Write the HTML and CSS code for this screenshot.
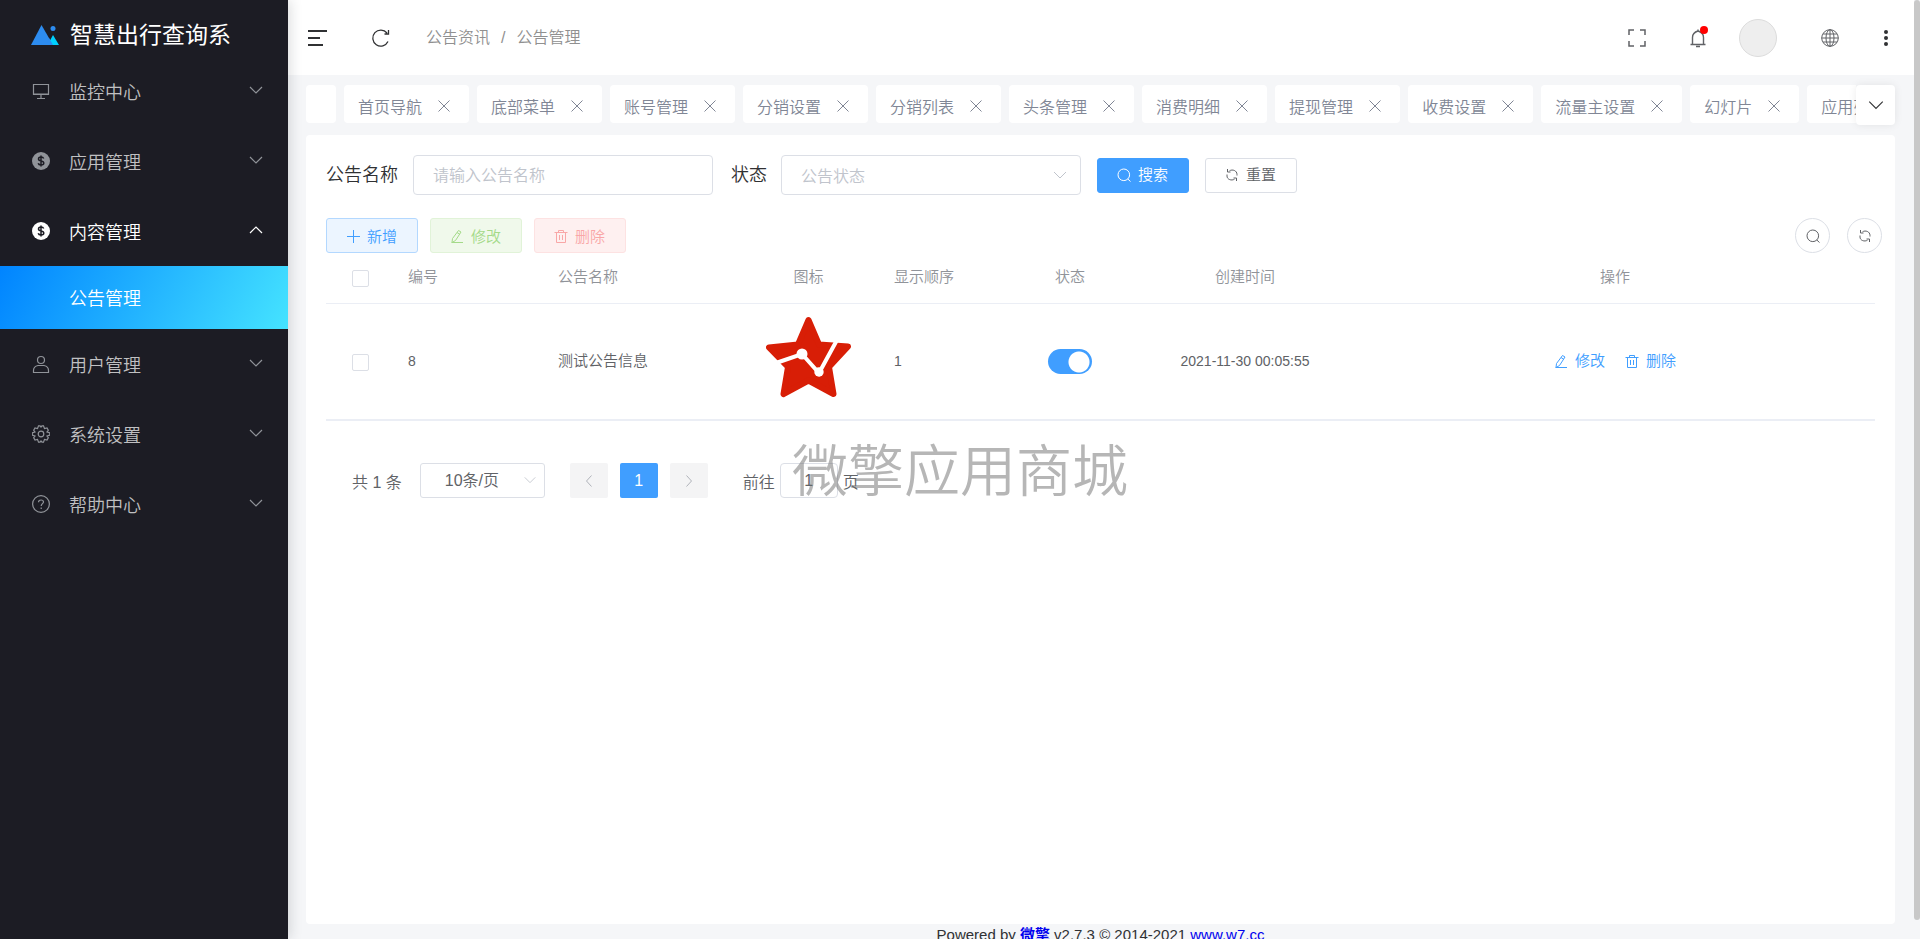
FILE: index.html
```html
<!DOCTYPE html>
<html lang="zh-CN">
<head>
<meta charset="utf-8">
<title>公告管理</title>
<link rel="stylesheet" href="styles.css">
</head>
<body>
<svg class="sprite" aria-hidden="true">
  <symbol id="i-down" viewBox="0 0 16 16"><path d="M2 5l6 6 6-6"/></symbol>
  <symbol id="i-up" viewBox="0 0 16 16"><path d="M2 11l6-6 6 6"/></symbol>
  <symbol id="i-left" viewBox="0 0 16 16"><path d="M10.500 2.500L5.500 8l5 5.500"/></symbol>
  <symbol id="i-right" viewBox="0 0 16 16"><path d="M5.500 2.500L10.500 8l-5 5.500"/></symbol>
  <symbol id="i-close" viewBox="0 0 16 16"><path d="M2.500 2.500l11 11M13.500 2.500l-11 11"/></symbol>
  <symbol id="i-plus" viewBox="0 0 14 14"><path d="M7.500 1v13M1 7.500h13"/></symbol>
  <symbol id="i-search" viewBox="0 0 14 14"><circle cx="6.800" cy="6.800" r="5.800"/><path d="M10.800 11l2.700 2.500"/></symbol>
  <symbol id="i-edit" viewBox="0 0 14 14"><path d="M8.500 1.500l2.500 1.500-5.500 8.500-3.500 2 .5-4zM7 3.500l2.700 1.700M1.500 13.500h11.500"/></symbol>
  <symbol id="i-trash" viewBox="0 0 14 14"><path d="M.5 3.500h13M4.500 3.500v-2h5v2M2.500 3.500v10h9v-10M5.500 6v5M8.500 6v5"/></symbol>
  <symbol id="i-sync" viewBox="0 0 14 14"><path d="M2.500 1v3h3M4.500 2.800C7.500 1 12 2.500 12 6.500v1M11.500 13v-3h-3M9.500 11.200C6.500 13 2 11.500 2 8V6.500"/></symbol>
  <symbol id="i-coin" viewBox="0 0 18 18"><circle cx="9" cy="9" r="9" fill="currentColor" stroke="none"/><path class="coin-mark" d="M11.700 6.500C11.200 5.300 10.200 5 9 5 7.500 5 6.500 5.700 6.500 6.900c0 2.700 5.300 1.400 5.300 4.100 0 1.300-1.200 2-2.800 2-1.400 0-2.500-.5-2.800-1.700M9 3.500v11"/></symbol>
</svg>

<div class="app">
  <aside class="sidebar">
    <div class="brand">
      <svg class="logo" viewBox="0 0 28 22"><path d="M10.500 1L22 21H0z" fill="#2d8cf0"/><path d="M22 11l6 10H16.500z" fill="#00d1ff"/><path d="M18 14l4 7H16z" fill="#2d8cf0"/><circle cx="22" cy="4.500" r="2.500" fill="#2d8cf0"/></svg>
      <h1>智慧出行查询系</h1>
    </div>
    <nav class="menu">
      <button class="menu-item"><svg class="icon m-icon" viewBox="0 0 18 18"><path d="M1.500 2.500h15v10h-15zM1 12h16M5 16.500h8M9 13v3"/></svg><span>监控中心</span><svg class="icon chev"><use href="#i-down"/></svg></button>
      <button class="menu-item"><svg class="icon m-icon"><use href="#i-coin"/></svg><span>应用管理</span><svg class="icon chev"><use href="#i-down"/></svg></button>
      <button class="menu-item open"><svg class="icon m-icon"><use href="#i-coin"/></svg><span>内容管理</span><svg class="icon chev"><use href="#i-up"/></svg></button>
      <a class="menu-sub" href="#notice">公告管理</a>
      <button class="menu-item"><svg class="icon m-icon" viewBox="0 0 18 18"><circle cx="9" cy="5" r="3.500"/><path d="M1.500 17.500v-2c0-3 2-4.500 4.500-5h6c2.500.5 4.500 2 4.500 5v2z"/></svg><span>用户管理</span><svg class="icon chev"><use href="#i-down"/></svg></button>
      <button class="menu-item"><svg class="icon m-icon" viewBox="0 0 18 18"><path d="M6.500.8h1.500l1 1.200 1-1.200h1.500l1 2.800 2.500-.6 1.300 2.300-1.300 1.700 2.800.8v2.400l-2.800.8 1.300 1.700-1.300 2.300-2.500-.6-1 2.800H10l-1-1.200-1 1.200H6.500l-1-2.800-2.500.6-1.300-2.300L3 11 .3 10.200V7.800L3 7 1.700 5.300 3 3l2.500.6z"/><circle cx="9" cy="9" r="2.800"/></svg><span>系统设置</span><svg class="icon chev"><use href="#i-down"/></svg></button>
      <button class="menu-item"><svg class="icon m-icon" viewBox="0 0 18 18"><circle cx="9" cy="9" r="8.400"/><path d="M6.500 7.200C6.500 4.200 11.500 4.400 11.500 7c0 1.700-2.300 1.700-2.300 4M9.200 12.500v1.400"/></svg><span>帮助中心</span><svg class="icon chev"><use href="#i-down"/></svg></button>
    </nav>
  </aside>

  <div class="page">
    <header class="topbar">
      <button class="plain" aria-label="折叠菜单"><svg class="icon i20 dark" viewBox="0 0 20 20"><path d="M0 3h19M0 10h12M0 17h15" stroke-width="2"/></svg></button>
      <button class="plain reload" aria-label="刷新"><svg class="icon i20 dark" viewBox="0 0 20 20"><path d="M17 13.500A8 8 0 1 1 16 5M17.500 2v4h-4" stroke-width="1.300"/></svg></button>
      <nav class="crumbs"><span>公告资讯</span><span>/</span><span>公告管理</span></nav>
      <div class="tools">
        <button class="plain" aria-label="全屏"><svg class="icon i18" viewBox="0 0 18 18"><path d="M1 6V1h5M12 1h5v5M17 12v5h-5M6 17H1v-5" stroke-width="1.500"/></svg></button>
        <button class="plain bell" aria-label="通知"><svg class="icon i20" viewBox="0 0 20 20"><path d="M2.500 16.500h15M4.500 16V9.500c0-3 2-5.500 5.500-6.500 3.500 1 5.500 3.500 5.500 6.500V16M10 1.500V3M8 18.500h4" stroke-width="1.400"/></svg><i class="dot"></i></button>
        <button class="avatar" aria-label="用户"></button>
        <button class="plain globe" aria-label="语言"><svg class="icon i18" viewBox="0 0 18 18"><circle cx="9" cy="9" r="8.300"/><ellipse cx="9" cy="9" rx="4" ry="8.300"/><path d="M9 .7v16.600M.7 9h16.600M2 5h14M2 13h14"/></svg></button>
        <button class="plain more" aria-label="更多"><svg class="icon i18" viewBox="0 0 18 18"><g fill="#303133" stroke="none"><circle cx="9" cy="3" r="2"/><circle cx="9" cy="9" r="2"/><circle cx="9" cy="15" r="2"/></g></svg></button>
      </div>
    </header>

    <main class="content">
      <div class="tabbar">
        <div class="tabs">
          <div class="tab stub"></div>
          <div class="tab">首页导航<svg class="icon i16"><use href="#i-close"/></svg></div>
          <div class="tab">底部菜单<svg class="icon i16"><use href="#i-close"/></svg></div>
          <div class="tab">账号管理<svg class="icon i16"><use href="#i-close"/></svg></div>
          <div class="tab">分销设置<svg class="icon i16"><use href="#i-close"/></svg></div>
          <div class="tab">分销列表<svg class="icon i16"><use href="#i-close"/></svg></div>
          <div class="tab">头条管理<svg class="icon i16"><use href="#i-close"/></svg></div>
          <div class="tab">消费明细<svg class="icon i16"><use href="#i-close"/></svg></div>
          <div class="tab">提现管理<svg class="icon i16"><use href="#i-close"/></svg></div>
          <div class="tab">收费设置<svg class="icon i16"><use href="#i-close"/></svg></div>
          <div class="tab">流量主设置<svg class="icon i16"><use href="#i-close"/></svg></div>
          <div class="tab">幻灯片<svg class="icon i16"><use href="#i-close"/></svg></div>
          <div class="tab">应用列表<svg class="icon i16"><use href="#i-close"/></svg></div>
        </div>
        <button class="tab-more" aria-label="更多标签"><svg class="icon i18"><use href="#i-down"/></svg></button>
      </div>

      <section class="card">
        <form class="filters">
          <label for="name">公告名称</label>
          <input class="field" id="name" type="text" placeholder="请输入公告名称">
          <label for="state" class="state-label">状态</label>
          <span class="select-wrap"><select class="field" id="state"><option>公告状态</option></select><svg class="icon i16"><use href="#i-down"/></svg></span>
          <button type="button" class="btn primary"><svg class="icon i14"><use href="#i-search"/></svg>搜索</button>
          <button type="button" class="btn"><svg class="icon i14"><use href="#i-sync"/></svg>重置</button>
        </form>

        <div class="actions">
          <button class="btn add"><svg class="icon i14"><use href="#i-plus"/></svg>新增</button>
          <button class="btn edit"><svg class="icon i14"><use href="#i-edit"/></svg>修改</button>
          <button class="btn del"><svg class="icon i14"><use href="#i-trash"/></svg>删除</button>
          <button class="round first" aria-label="搜索"><svg class="icon i14"><use href="#i-search"/></svg></button>
          <button class="round" aria-label="刷新"><svg class="icon i14"><use href="#i-sync"/></svg></button>
        </div>

        <table class="grid">
          <colgroup><col class="c-check"><col class="c-id"><col class="c-name"><col class="c-icon"><col class="c-order"><col class="c-state"><col class="c-time"><col></colgroup>
          <thead>
            <tr><th class="mid"><input type="checkbox" aria-label="全选"></th><th>编号</th><th>公告名称</th><th class="mid">图标</th><th>显示顺序</th><th class="mid">状态</th><th class="mid">创建时间</th><th class="mid">操作</th></tr>
          </thead>
          <tbody>
            <tr>
              <td class="mid"><input type="checkbox" aria-label="选择"></td>
              <td class="num">8</td>
              <td>测试公告信息</td>
              <td class="mid"><svg class="star" viewBox="0 0 85 90"><path d="M42.500 4L53 28.500l29 2L63 51l4.500 27L42.500 64.500 17.500 78 22 51 3 31.500l29-3z" fill="#d81e06" stroke="#d81e06" stroke-width="6" stroke-linejoin="round"/><path d="M10 47l26-9 17 19 18-33" fill="none" stroke="#fff" stroke-width="4"/><circle cx="36" cy="38" r="5.500" fill="#fff"/><circle cx="53" cy="56" r="4.700" fill="#fff"/></svg></td>
              <td class="num">1</td>
              <td class="mid"><input type="checkbox" class="switch" aria-label="启用" checked></td>
              <td class="mid num">2021-11-30 00:05:55</td>
              <td class="mid"><div class="ops"><a href="#edit"><svg class="icon i14"><use href="#i-edit"/></svg>修改</a><a href="#del"><svg class="icon i14"><use href="#i-trash"/></svg>删除</a></div></td>
            </tr>
          </tbody>
        </table>

        <div class="pager">
          <span class="total">共 1 条</span>
          <span class="select-wrap size"><select aria-label="每页条数"><option>10条/页</option></select><svg class="icon i14"><use href="#i-down"/></svg></span>
          <div class="pages">
            <button aria-label="上一页"><svg class="icon i16"><use href="#i-left"/></svg></button>
            <button class="on">1</button>
            <button aria-label="下一页"><svg class="icon i16"><use href="#i-right"/></svg></button>
          </div>
          <label class="jump">前往<input type="text" value="1">页</label>
        </div>
      </section>

      <footer>Powered by <a href="#w7"><b>微擎</b></a> v2.7.3 © 2014-2021 <a href="#site">www.w7.cc</a></footer>
    </main>
  </div>
  <div class="scrollbar"><i></i></div>
</div>
<div class="watermark">微擎应用商城</div>
</body>
</html>
```

FILE: styles.css
```css
* { box-sizing: border-box; }
body {
  margin: 0;
  height: 100vh;
  overflow: hidden;
  color: #303133;
  font-family: "Liberation Sans", "Noto Sans CJK SC", sans-serif;
  font-size: 16px;
  font-weight: 350;
}
button, input, select { font: inherit; color: inherit; }
button { border: 0; background: none; padding: 0; }
a { text-decoration: none; }
.sprite { position: absolute; width: 0; height: 0; }
.icon { fill: none; stroke: currentColor; stroke-width: 1; flex: none; display: block; }
.i14 { width: 14px; height: 14px; }
.i16 { width: 16px; height: 16px; }
.i18 { width: 18px; height: 18px; }
.i20 { width: 20px; height: 20px; }
.dark { color: #303133; }

.app { display: flex; height: 100vh; }

.sidebar {
  width: 288px;
  flex: none;
  background: #1c1c24;
  box-shadow: 2px 0 12px rgba(29, 35, 41, .16);
  z-index: 1;
}
.brand { height: 56px; padding: 13px 0 0 31px; display: flex; align-items: center; }
.logo { width: 28px; height: 22px; margin-right: 11px; }
.brand h1 { margin: 0; font-size: 23px; line-height: 44px; font-weight: 400; color: #fff; }
.menu { display: flex; flex-direction: column; }
.menu-item {
  height: 70px;
  padding: 0 24px 0 32px;
  display: flex;
  align-items: center;
  font-size: 18px;
  color: #c0c0c2;
}
.m-icon { width: 18px; height: 18px; margin-right: 19px; color: #909399; stroke-width: 1.2; }
.coin-mark { stroke: #1c1c24; stroke-width: 1.5; }
.chev { width: 16px; height: 16px; margin: 0 0 2px auto; color: #909399; stroke-width: 1.2; }
.open, .open .icon { color: #fff; }
.menu-sub {
  height: 63px;
  padding: 2px 0 0 69px;
  line-height: 63px;
  font-size: 18px;
  color: #fff;
  background: linear-gradient(118deg, #0084ff, #45e3ff);
}

.page { flex: 1; min-width: 0; background: #f5f6f8; }
.topbar {
  height: 75px;
  padding: 0 19px 0 20px;
  display: flex;
  align-items: center;
  background: #fff;
}
.reload { margin-left: 43px; }
.crumbs { margin-left: 35px; display: flex; align-items: center; gap: 11px; line-height: 24px; color: #909090; }
.tools { margin-left: auto; display: flex; align-items: center; color: #606266; }
.bell { position: relative; margin-left: 42px; }
.dot { position: absolute; top: -2px; right: 0; width: 8px; height: 8px; border-radius: 50%; background: #f00; }
.avatar { width: 38px; height: 38px; margin-left: 31px; border-radius: 50%; background: #eee; border: 1px solid #dcdcdc; }
.globe { margin-left: 44px; }
.more { margin-left: 38px; }

.content { padding: 10px 19px 0 18px; }
.tabbar { display: flex; align-items: flex-start; height: 50px; }
.tabs { flex: 1; min-width: 0; display: flex; gap: 8px; overflow: hidden; }
.tab {
  flex: none;
  height: 38px;
  padding: 3px 17px 0 14px;
  display: flex;
  align-items: center;
  gap: 14px;
  background: #fff;
  border-radius: 4px;
  color: #808695;
}
.stub { width: 30px; padding: 0; }
.tab-more {
  width: 39px;
  height: 40px;
  display: grid;
  place-items: center;
  background: #fff;
  border-radius: 4px;
  box-shadow: 0 0 8px rgba(0, 0, 0, .08);
}

.card { height: calc(100vh - 150px); padding: 20px; background: #fff; border-radius: 4px; }
.filters { display: flex; align-items: center; font-size: 18px; line-height: 40px; }
.field {
  width: 300px;
  height: 40px;
  padding: 1px 19px 0;
  border: 1px solid #dcdfe6;
  border-radius: 4px;
  background: #fff;
  font-size: 16px;
}
.field::placeholder { color: #c0c4cc; opacity: 1; }
.filters #name { margin-left: 15px; }
.state-label { margin: 0 14px 0 18px; }
.select-wrap { position: relative; display: flex; }
.select-wrap select { appearance: none; color: #c0c4cc; }
.select-wrap .icon { position: absolute; right: 13px; top: 50%; margin-top: -8px; color: #c0c4cc; pointer-events: none; }
.btn {
  height: 35px;
  padding: 0 20px 0 19px;
  display: flex;
  align-items: center;
  gap: 7px;
  border: 1px solid #dcdfe6;
  border-radius: 3px;
  font-size: 15px;
  color: #606266;
}
.filters .btn { margin-left: 16px; }
.primary { background: #409eff; border-color: #409eff; color: #fff; }

.actions { display: flex; gap: 12px; margin-top: 23px; margin-right: -7px; }
.add { background: #ecf5ff; border-color: #b3d8ff; color: #409eff; }
.edit { background: #f0f9eb; border-color: #e1f3d8; color: #a4da89; }
.del { background: #fef0f0; border-color: #fde2e2; color: #f9a7a7; }
.round {
  width: 35px;
  height: 35px;
  margin-left: 5px;
  display: grid;
  place-items: center;
  border: 1px solid #dcdfe6;
  border-radius: 50%;
  color: #606266;
}
.first { margin-left: auto; }

.grid { width: 100%; table-layout: fixed; border-collapse: collapse; font-size: 15px; line-height: 24px; color: #606266; }
.grid th { height: 50px; padding: 0 14px 1px; font-weight: 350; text-align: left; color: #909399; border-bottom: 1px solid #ebeef5; }
.grid td { height: 117px; padding: 0 14px; border-bottom: 2px solid #ebeef5; }
.grid .mid { text-align: center; }
.grid .num { font-size: 14px; }
.c-check { width: 68px; }
.c-id { width: 150px; }
.c-name { width: 193px; }
.c-icon { width: 143px; }
.c-order { width: 125px; }
.c-state { width: 130px; }
.c-time { width: 220px; }
.grid input { appearance: none; display: inline-block; vertical-align: middle; width: 17px; height: 17px; margin: 0; border: 1px solid #dcdfe6; border-radius: 2px; background: #fff; }
.grid .switch {
  width: 44px;
  height: 25px;
  border: 0;
  border-radius: 13px;
  background: radial-gradient(circle at 31px 13px, #fff 10px, #409eff 11px);
}
.star { display: block; width: 85px; height: 90px; margin: 0 auto; }
.ops { display: flex; justify-content: center; gap: 20px; }
.ops a { display: flex; align-items: center; gap: 7px; color: #409eff; }

.pager { display: flex; align-items: center; margin-top: 42px; padding-left: 26px; color: #606266; }
.size { margin-left: 18px; }
.size select { width: 125px; height: 35px; padding: 0 24px; border: 1px solid #dcdfe6; border-radius: 3px; background: #fff; color: #606266; }
.size .icon { right: 8px; }
.pages { display: flex; gap: 12px; margin-left: 25px; }
.pages button { width: 38px; height: 35px; display: grid; place-items: center; border-radius: 2px; background: #f4f4f5; color: #b0b3ba; }
.pages .on { background: #409eff; color: #fff; }
.jump { display: flex; align-items: center; gap: 5px; margin-left: 35px; }
.jump input { width: 58px; height: 35px; border: 1px solid #dcdfe6; border-radius: 4px; text-align: center; background: #fff; }

footer { height: 40px; text-align: center; font-size: 15px; line-height: 21px; }
footer a { color: #00e; }

.scrollbar { width: 6px; flex: none; background: #f5f6f8; }
.scrollbar i { display: block; height: 98%; border-radius: 3px; background: #c8c8c8; }

.watermark {
  position: absolute;
  inset: 0;
  padding-bottom: 6px;
  display: grid;
  place-items: center;
  pointer-events: none;
  font-size: 56px;
  color: rgba(110, 110, 110, .5);
}
```
